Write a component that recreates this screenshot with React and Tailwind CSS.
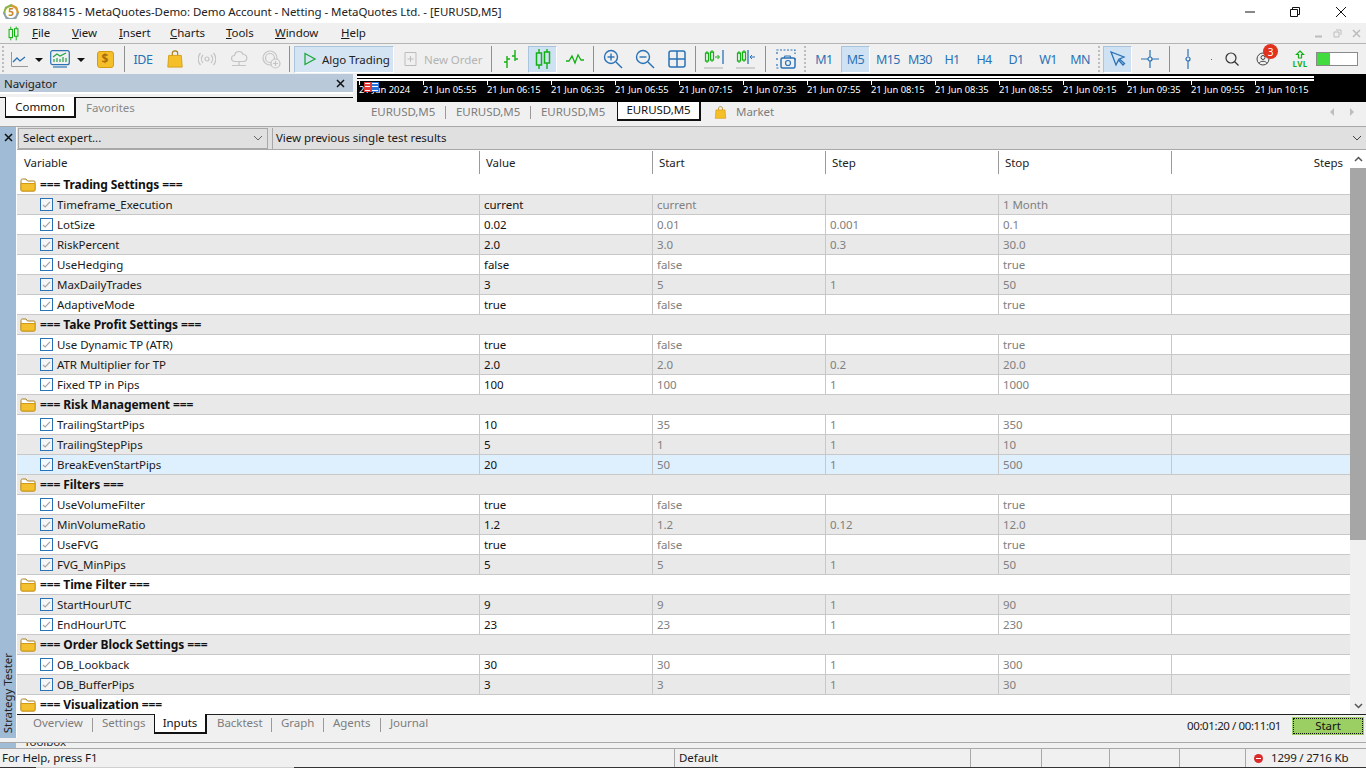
import React from "react";

const FONT = "font-['Noto_Sans',sans-serif]";

const rows = [
  { g: "=== Trading Settings ===" },
  { n: "Timeframe_Execution", v: "current", a: "current", s: "", e: "1 Month" },
  { n: "LotSize", v: "0.02", a: "0.01", s: "0.001", e: "0.1" },
  { n: "RiskPercent", v: "2.0", a: "3.0", s: "0.3", e: "30.0" },
  { n: "UseHedging", v: "false", a: "false", s: "", e: "true" },
  { n: "MaxDailyTrades", v: "3", a: "5", s: "1", e: "50" },
  { n: "AdaptiveMode", v: "true", a: "false", s: "", e: "true" },
  { g: "=== Take Profit Settings ===" },
  { n: "Use Dynamic TP (ATR)", v: "true", a: "false", s: "", e: "true" },
  { n: "ATR Multiplier for TP", v: "2.0", a: "2.0", s: "0.2", e: "20.0" },
  { n: "Fixed TP in Pips", v: "100", a: "100", s: "1", e: "1000" },
  { g: "=== Risk Management ===" },
  { n: "TrailingStartPips", v: "10", a: "35", s: "1", e: "350" },
  { n: "TrailingStepPips", v: "5", a: "1", s: "1", e: "10" },
  { n: "BreakEvenStartPips", v: "20", a: "50", s: "1", e: "500", hl: true },
  { g: "=== Filters ===" },
  { n: "UseVolumeFilter", v: "true", a: "false", s: "", e: "true" },
  { n: "MinVolumeRatio", v: "1.2", a: "1.2", s: "0.12", e: "12.0" },
  { n: "UseFVG", v: "true", a: "false", s: "", e: "true" },
  { n: "FVG_MinPips", v: "5", a: "5", s: "1", e: "50" },
  { g: "=== Time Filter ===" },
  { n: "StartHourUTC", v: "9", a: "9", s: "1", e: "90" },
  { n: "EndHourUTC", v: "23", a: "23", s: "1", e: "230" },
  { g: "=== Order Block Settings ===" },
  { n: "OB_Lookback", v: "30", a: "30", s: "1", e: "300" },
  { n: "OB_BufferPips", v: "3", a: "3", s: "1", e: "30" },
  { g: "=== Visualization ===" },
];

const times = ["05:55", "06:15", "06:35", "06:55", "07:15", "07:35", "07:55", "08:15", "08:35", "08:55", "09:15", "09:35", "09:55", "10:15"];

function Folder() {
  return (
    <svg width="16" height="14" viewBox="0 0 16 14" className="shrink-0">
      <path d="M1 12V2.5C1 1.7 1.5 1 2.3 1H6l1.5 2H14c.6 0 1 .4 1 1v8c0 .6-.4 1-1 1H2c-.6 0-1-.4-1-1Z" fill="#fff" stroke="#a8801c" />
      <path d="M1 5.5h14V12c0 .6-.4 1-1 1H2c-.6 0-1-.4-1-1Z" fill="#f5c02e" stroke="#d09a14" />
    </svg>
  );
}

function Check() {
  return (
    <div className="w-[13px] h-[13px] border border-[#2a72b5] flex items-center justify-center shrink-0 bg-white/60">
      <svg width="9" height="9" viewBox="0 0 9 9">
        <path d="M1 5l2.2 2L8 1.8" fill="none" stroke="#a6a6a6" strokeWidth="1.2" />
      </svg>
    </div>
  );
}

function Row({ row, i }) {
  const bg = row.hl ? "bg-[#deeffe]" : i % 2 === 0 ? "bg-white" : "bg-[#e9e9e9]";
  if (row.g) {
    return (
      <div className={`h-[20px] shrink-0 flex items-center pl-[3px] gap-[4px] border-b border-[#c8c8c8] ${bg}`}>
        <Folder />
        <span className="font-bold text-[12px] tracking-[-0.1px] text-[#111]">{row.g}</span>
      </div>
    );
  }
  const cell = "h-full flex items-center pl-[4px] border-r border-[#c8c8c8] text-[#808080]";
  return (
    <div className={`h-[20px] shrink-0 grid grid-cols-[463px_173px_173px_173px_173px_1fr] border-b border-[#c8c8c8] ${bg}`}>
      <div className="h-full flex items-center pl-[23px] gap-[4px] border-r border-[#c8c8c8] text-[#1a1a1a]">
        <Check />
        <span>{row.n}</span>
      </div>
      <div className={`${cell} !text-[#111]`}>{row.v}</div>
      <div className={cell}>{row.a}</div>
      <div className={cell}>{row.s}</div>
      <div className={cell}>{row.e}</div>
      <div />
    </div>
  );
}

function Tool({ children, active, w = "w-8" }) {
  if (active) {
    return (
      <div className="w-8 h-[27px] shrink-0 pl-px">
        <div className="w-[29px] h-[27px] flex items-center justify-center bg-[#cfe2f3] border border-[#a9c4dc] border-r-white border-b-white">
          {children}
        </div>
      </div>
    );
  }
  return <div className={`${w} h-[27px] flex items-center justify-center shrink-0`}>{children}</div>;
}

function Sep() {
  return (
    <div className="w-[5px] h-[26px] flex justify-center shrink-0">
      <div className="w-px h-full bg-[#8f8f8f]" />
    </div>
  );
}

function Grip() {
  return <div className="w-[6px] h-[26px] shrink-0 flex justify-center"><div className="h-full border-l-2 border-dotted border-[#bdbdbd]" /></div>;
}

function Tf({ label, active }) {
  return (
    <Tool active={active}>
      <span className="text-[12.5px] tracking-[-0.6px] mt-[2px] text-[#2a72b5]">{label}</span>
    </Tool>
  );
}

function Caret() {
  return <div className="w-0 h-0 border-x-[4px] border-x-transparent border-t-[4px] border-t-[#111] ml-[7px] mt-[2px]" />;
}

function Candles({ color = "#13b013", size = 22 }) {
  return (
    <svg width={size} height={size} viewBox="0 0 22 22">
      <path d="M7 1v4M7 17v4M15 1v3M15 15v6" stroke={color} strokeWidth="1.4" />
      <rect x="4.5" y="5" width="5" height="12" fill="none" stroke={color} strokeWidth="1.5" />
      <rect x="12.5" y="4" width="5" height="11" fill="none" stroke={color} strokeWidth="1.5" />
    </svg>
  );
}

function Bag({ size = 18 }) {
  return (
    <svg width={size} height={size} viewBox="0 0 18 20">
      <path d="M6 7V3.5C6 2 7.2 1 9 1s3 1 3 2.5V7" fill="none" stroke="#a87a10" strokeWidth="1.2" />
      <path d="M2 6h14l1 13H1Z" fill="#f5bf2a" stroke="#d59c12" />
    </svg>
  );
}

function ZoomGlass({ plus }) {
  return (
    <svg width="20" height="20" viewBox="0 0 20 20" fill="none" stroke="#2a72b5" strokeWidth="1.4">
      <circle cx="8" cy="8" r="6.5" />
      <path d="M13 13l6 6" />
      <path d="M4.5 8h7" />
      {plus && <path d="M8 4.5v7" />}
    </svg>
  );
}

function App() {
  return (
    <div className={`w-[1366px] h-[768px] overflow-hidden flex flex-col bg-[#f0f0f0] text-[11.5px] tracking-[-0.05px] leading-none text-[#1a1a1a] ${FONT}`}>
      {/* title bar */}
      <div className="h-[23px] bg-white flex items-center shrink-0 pl-[2px]">
        <svg width="18" height="18" viewBox="0 0 18 18" className="shrink-0">
          <path d="M9 1l6 3 2 6-3 6H4l-3-6 2-6Z" fill="#8fb04a" />
          <path d="M9 1l6 3 2 6H9Z" fill="#d99a2b" />
          <path d="M1 10l3 6h10l3-6Z" fill="#8ba3b0" />
          <circle cx="9" cy="9.5" r="5.5" fill="#fff" />
          <text x="9" y="13" textAnchor="middle" fontSize="10" fontWeight="700" fill="#c98a1c" fontFamily="Noto Sans">5</text>
        </svg>
        <span className="ml-[3px] text-[#222]">98188415 - MetaQuotes-Demo: Demo Account - Netting - MetaQuotes Ltd. - [EURUSD,M5]</span>
        <div className="ml-auto flex items-center">
          <svg width="12" height="12" viewBox="0 0 12 12" className="mr-[33px]"><path d="M1 6h10" stroke="#111" /></svg>
          <svg width="12" height="12" viewBox="0 0 12 12" className="mr-[34px]" fill="none" stroke="#111"><path d="M1.5 3.5h7v7h-7ZM3.5 3V1.5h7v7H9" /></svg>
          <svg width="12" height="12" viewBox="0 0 12 12" className="mr-[19px]" stroke="#111"><path d="M1 1l10 10M11 1L1 11" /></svg>
        </div>
      </div>

      {/* menu bar */}
      <div className="h-[20px] shrink-0 flex items-center relative">
        <div className="ml-[6px] w-[26px]"><Candles size={15} /></div>
        {[["F", "ile", "w-[40px]"], ["V", "iew", "w-[47px]"], ["I", "nsert", "w-[51px]"], ["C", "harts", "w-[56px]"], ["T", "ools", "w-[49px]"], ["W", "indow", "w-[66px]"], ["H", "elp", "w-[40px]"]].map(([u, rest, w]) => (
          <span key={u} className={w}><span className="underline">{u}</span>{rest}</span>
        ))}
        <div className="ml-auto flex items-center gap-[10px] pr-[5px]">
          <svg width="9" height="9" viewBox="0 0 9 9"><path d="M1 7.5h7" stroke="#bdbdbd" strokeWidth="2" /></svg>
          <svg width="9" height="9" viewBox="0 0 9 9" fill="none" stroke="#bdbdbd"><path d="M1 3h5v5H1ZM3 1h5v5" /></svg>
          <svg width="9" height="9" viewBox="0 0 9 9" stroke="#bdbdbd" strokeWidth="1.6"><path d="M1 1l7 7M8 1L1 8" /></svg>
        </div>
      </div>

      {/* toolbar */}
      <div className="h-[31px] shrink-0 flex items-center border-t border-[#b4b4b4]">
        <Grip />
        <div className="w-[2px]" />
        <Tool w="w-[38px]">
          <svg width="17" height="15" viewBox="0 0 17 15" fill="none" stroke="#2a72b5"><path d="M.5 0v14.5H17" stroke="#999" /><path d="M2 10l4-4 3 3 5-4" strokeWidth="1.3" /></svg>
          <Caret />
        </Tool>
        <Tool w="w-[42px]">
          <svg width="20" height="19" viewBox="0 0 20 19" fill="none" stroke="#2a72b5" strokeWidth="1.2"><rect x=".7" y=".7" width="18.6" height="14" rx="2" /><path d="M3 7l4-3 3 2 6-3" stroke="#27a34a" /><path d="M4 12V9M7 12V8M10 12V9M13 12V7M16 12V8" stroke="#27a34a" /><path d="M3 17h14" /></svg>
          <Caret />
        </Tool>
        <Tool w="w-[34px]">
          <div className="w-[17px] h-[17px] rounded-[3px] bg-[#f5bf2a] border border-[#d59c12] flex items-center justify-center text-[12px] font-bold text-[#a5700a]">$</div>
        </Tool>
        <Sep />
        <Tool><span className="text-[12.5px] tracking-[-0.4px] mt-[2px] text-[#2a72b5]">IDE</span></Tool>
        <Tool><Bag /></Tool>
        <Tool>
          <svg width="18" height="14" viewBox="0 0 18 14" fill="none" stroke="#c4c4c4" strokeWidth="1.2"><circle cx="9" cy="7" r="2" /><path d="M5 3a6 6 0 0 0 0 8M13 3a6 6 0 0 1 0 8M2.5 1a9 9 0 0 0 0 12M15.5 1a9 9 0 0 1 0 12" /></svg>
        </Tool>
        <Tool>
          <svg width="18" height="18" viewBox="0 0 18 18" fill="none" stroke="#c4c4c4" strokeWidth="1.2"><path d="M4.5 11.5a3 3 0 0 1 0-6 4.5 4.5 0 0 1 8.7-1 3.5 3.5 0 0 1 .3 7ZM9 11.5V15M2 15.5h14" /></svg>
        </Tool>
        <Tool>
          <svg width="19" height="19" viewBox="0 0 19 19" fill="none" stroke="#c4c4c4" strokeWidth="1.2"><circle cx="8" cy="8" r="7" /><circle cx="8" cy="8" r="4.5" /><circle cx="13.5" cy="13.5" r="4.5" fill="#f0f0f0" /><path d="M13.5 11v5M11 13.5h5" /></svg>
        </Tool>
        <Sep />
        <div className="ml-[2px] w-[100px] h-[27px] shrink-0 flex items-center bg-[#d5e4f2] border border-[#a9c4dc] border-r-white border-b-white pl-[8px]">
          <svg width="14" height="14" viewBox="0 0 14 14" fill="none" stroke="#1fa83a" strokeWidth="1.3" className="shrink-0"><path d="M2 1.5l10 5.5-10 5.5Z" /></svg>
          <span className="ml-[5px] mt-[2px] whitespace-nowrap text-[#222]">Algo Trading</span>
        </div>
        <div className="w-[95px] h-[27px] shrink-0 flex items-center pl-[10px]">
          <svg width="13" height="16" viewBox="0 0 13 16" fill="none" stroke="#bdbdbd" className="shrink-0"><path d="M1 1.5h11v13H1ZM6.5 5v6M3.5 8h6" /></svg>
          <span className="ml-[7px] mt-[2px] whitespace-nowrap text-[#b4b4b4]">New Order</span>
        </div>
        <Sep />
        <div className="w-px" />
        <Tool>
          <svg width="18" height="20" viewBox="0 0 18 20" stroke="#13b013" strokeWidth="1.4"><path d="M5 7v12M2 13h3M5 10h3M13 1v11M10 7h3M13 10h3" /></svg>
        </Tool>
        <Tool active><Candles /></Tool>
        <Tool>
          <svg width="18" height="12" viewBox="0 0 18 12" fill="none" stroke="#13b013" strokeWidth="1.3"><path d="M0 8h3l3-5 3 7 3-8 3 5h3" /></svg>
        </Tool>
        <Sep />
        <div className="w-px" />
        <Tool><ZoomGlass plus /></Tool>
        <Tool><ZoomGlass /></Tool>
        <Tool>
          <svg width="18" height="18" viewBox="0 0 18 18" fill="none" stroke="#2a72b5" strokeWidth="1.5"><rect x="1" y="1" width="16" height="16" rx="2" /><path d="M9 1v16M1 9h16" /></svg>
        </Tool>
        <Sep />
        <Tool>
          <svg width="20" height="22" viewBox="0 0 20 22" fill="none"><path d="M3 3v3M3 13v2M8 2v3M8 12v2" stroke="#13b013" /><rect x="1.5" y="5" width="3" height="8" stroke="#13b013" strokeWidth="1.2" /><rect x="6.5" y="4" width="3" height="8" stroke="#13b013" strokeWidth="1.2" /><path d="M11 9h4M13.5 7l2 2-2 2" stroke="#13b013" /><path d="M19 2v14" stroke="#2a72b5" strokeWidth="1.3" /><path d="M0 20h19" stroke="#b0b0b0" /></svg>
        </Tool>
        <Tool>
          <svg width="20" height="22" viewBox="0 0 20 22" fill="none"><path d="M3 3v3M3 13v2M8 2v3M8 12v2" stroke="#13b013" /><rect x="1.5" y="5" width="3" height="8" stroke="#13b013" strokeWidth="1.2" /><rect x="6.5" y="4" width="3" height="8" stroke="#13b013" strokeWidth="1.2" /><path d="M19 9h-5M16 7l-2 2 2 2" stroke="#2a72b5" /><path d="M12 2v14" stroke="#2a72b5" strokeWidth="1.3" /><path d="M0 20h19" stroke="#b0b0b0" /></svg>
        </Tool>
        <div className="w-px" />
        <Sep />
        <div className="w-[2px]" />
        <Tool>
          <svg width="20" height="20" viewBox="0 0 20 20" fill="none" stroke="#2a72b5" strokeWidth="1.2"><path d="M1 5V1h18v4M1 9v3M19 9v2M1 15v4h3" strokeDasharray="2 1.5" /><rect x="5" y="9" width="14" height="10" rx="1.5" strokeWidth="1.5" /><circle cx="12" cy="14" r="2.5" /><path d="M8 9l1-2h5l1 2" /></svg>
        </Tool>
        <Grip />
        {["M1", "M5", "M15", "M30", "H1", "H4", "D1", "W1", "MN"].map((t) => <Tf key={t} label={t} active={t === "M5"} />)}
        <Grip />
        <Tool active>
          <svg width="16" height="16" viewBox="0 0 16 16" fill="none" stroke="#2a72b5" strokeWidth="1.3"><path d="M1 1l5 13 2.5-5L13 14l1.5-1.5L9.5 8 14 6Z" /></svg>
        </Tool>
        <Tool>
          <svg width="18" height="18" viewBox="0 0 18 18" fill="none" stroke="#2a72b5" strokeWidth="1.2"><path d="M9 0v7M9 11v7M0 9h7M11 9h7" /><circle cx="9" cy="9" r="2" /></svg>
        </Tool>
        <div className="w-px" />
        <Sep />
        <Tool>
          <svg width="6" height="20" viewBox="0 0 6 20" fill="none" stroke="#2a72b5" strokeWidth="1.2"><path d="M3 0v7.5M3 12v8" /><circle cx="3" cy="10" r="2" /></svg>
        </Tool>
        <Tool w="w-[14px]"><div className="w-px h-px bg-[#2a72b5]" /></Tool>
        <Tool w="w-[28px]">
          <svg width="14" height="14" viewBox="0 0 14 14" fill="none" stroke="#333" strokeWidth="1.2"><circle cx="6" cy="6" r="5" /><path d="M9.5 9.5L13.5 13.5" /></svg>
        </Tool>
        <div className="w-px" />
        <Tool>
          <div className="relative">
            <svg width="14" height="14" viewBox="0 0 14 14" fill="none" stroke="#444"><circle cx="7" cy="7" r="6" /><circle cx="7" cy="5.5" r="2" /><path d="M3 11.5c1-3 7-3 8 0" /></svg>
            <div className="absolute -top-[8px] left-[7px] w-[15px] h-[15px] rounded-full bg-[#e2311d] flex items-center justify-center text-[10px] text-white">3</div>
          </div>
        </Tool>
        <div className="w-[5px]" />
        <Tool>
          <div className="flex flex-col items-center text-[#13b013]">
            <svg width="10" height="9" viewBox="0 0 10 9" fill="none" stroke="#13b013" strokeWidth="1.2"><path d="M5 1l3.5 3.5H6.5V8h-3V4.5H1.5Z" /></svg>
            <span className="text-[8px] font-bold tracking-[.3px] mt-px">LVL</span>
          </div>
        </Tool>
        <div className="w-[42px] h-[14px] shrink-0 border border-[#8a8a8a] bg-white">
          <div className="w-[13px] h-full bg-[#3fdb3f]" />
        </div>
      </div>

      {/* navigator + charts */}
      <div className="h-[52px] shrink-0 flex">
        <div className="w-[357px] shrink-0 flex flex-col">
          <div className="h-[18px] shrink-0 bg-[#b9c9d9] mr-[4px] flex items-center pl-[4px] pt-px text-[#222] justify-between pr-[8px]">
            <span>Navigator</span>
            <svg width="9" height="9" viewBox="0 0 9 9" stroke="#111" strokeWidth="1.5"><path d="M1 1l7 7M8 1L1 8" /></svg>
          </div>
          <div className="h-[2px] bg-white mr-[4px]" />
          <div className="h-[3px] mr-[4px]" />
          <div className="flex mr-[4px] h-[22px]">
            <div className="w-[5px] border-t border-[#111]" />
            <div className="w-[71px] h-[21px] bg-white border-x border-b border-[#111] border-r-2 border-b-2 flex items-center justify-center text-[#111]">Common</div>
            <div className="flex-1 border-t border-[#111] flex items-center pl-[10px] pb-[2px] text-[#8a8a8a]">Favorites</div>
          </div>
        </div>
        <div className="flex-1 flex flex-col min-w-0">
          <div className="h-[28px] shrink-0 bg-black relative overflow-hidden">
            <div className="h-[2px] mt-[2px] w-[957px] bg-white" />
            <div className="h-[2px] mt-px w-[957px] bg-white" />
            <div className="flex pl-[2px] text-[9.4px] tracking-normal text-white">
              <div className="w-[64px] shrink-0 relative">
                <div className="w-px h-[4px] bg-white" />
                <span className="block whitespace-nowrap">21 Jun 2024</span>
                <div className="absolute left-[5px] top-px flex">
                  <div className="w-[7px] h-[10px] bg-[#e23b3b] flex flex-col justify-around px-px"><div className="h-px bg-white" /><div className="h-px bg-white" /><div className="h-px bg-white" /></div>
                  <div className="w-[8px] h-[10px] bg-[#2a72d5] flex flex-col justify-around px-px"><div className="h-px bg-white" /><div className="h-px bg-white" /><div className="h-px bg-white" /></div>
                </div>
              </div>
              {times.map((t) => (
                <div key={t} className="w-[64px] shrink-0">
                  <div className="w-px h-[4px] bg-white" />
                  <span className="block whitespace-nowrap">21 Jun {t}</span>
                </div>
              ))}
            </div>
          </div>
          <div className="h-[20px] shrink-0 flex items-center text-[#7d7d7d] pl-[14px]">
            <span className="w-[74px]">EURUSD,M5</span>
            <div className="w-px h-[13px] bg-[#9a9a9a] mr-[10px]" />
            <span className="w-[74px]">EURUSD,M5</span>
            <div className="w-px h-[13px] bg-[#9a9a9a] mr-[10px]" />
            <span className="w-[76px]">EURUSD,M5</span>
            <div className="w-[84px] h-[20px] -mt-[2px] bg-white border-x border-b border-[#111] border-r-2 border-b-2 flex items-center justify-center text-[#111]">EURUSD,M5</div>
            <div className="ml-[13px]"><Bag size={13} /></div>
            <span className="ml-[9px]">Market</span>
            <div className="ml-auto flex items-center gap-[16px] pr-[12px]">
              <div className="w-0 h-0 border-y-[4px] border-y-transparent border-r-[4px] border-r-[#bdbdbd]" />
              <div className="w-0 h-0 border-y-[4px] border-y-transparent border-l-[4px] border-l-[#bdbdbd]" />
            </div>
          </div>
          <div className="flex-1" />
        </div>
      </div>

      {/* strategy tester */}
      <div className="flex-1 min-h-0 flex border-t border-[#a8a8a8]">
        <div className="w-[17px] shrink-0 flex flex-col">
          <div className="h-[611px] bg-[#9fbbd6] flex flex-col items-center justify-between pb-[5px] border-r border-white">
            <svg width="9" height="9" viewBox="0 0 9 9" stroke="#111" strokeWidth="1.5" className="mt-[6px]"><path d="M1 1l7 7M8 1L1 8" /></svg>
            <span className="[writing-mode:vertical-rl] rotate-180 text-[#222] whitespace-nowrap">Strategy Tester</span>
          </div>
        </div>
        <div className="flex-1 min-w-0 flex flex-col">
          <div className="h-[23px] shrink-0 flex items-center gap-[4px] bg-[#e0e0e0] border-b border-[#a8a8a8] pl-px">
            <div className="w-[250px] h-[21px] border border-[#a8a8a8] flex items-center justify-between px-[4px]">
              <span>Select expert...</span>
              <svg width="10" height="6" viewBox="0 0 10 6" fill="none" stroke="#666"><path d="M1 1l4 4 4-4" /></svg>
            </div>
            <div className="flex-1 h-[21px] border-l border-[#a8a8a8] flex items-center justify-between px-[3px]">
              <span>View previous single test results</span>
              <svg width="10" height="6" viewBox="0 0 10 6" fill="none" stroke="#444" className="mr-[1px]"><path d="M1 1l4 4 4-4" /></svg>
            </div>
          </div>
          <div className="flex-1 min-h-0 flex bg-white">
            <div className="flex-1 min-w-0 flex flex-col">
              <div className="h-[25px] shrink-0 grid grid-cols-[463px_173px_173px_173px_173px_1fr] items-center bg-white text-[#222]">
                {["Variable", "Value", "Start", "Step", "Stop"].map((h, i) => (
                  <div key={h} className={`h-[23px] flex items-center border-r border-[#9a9a9a] ${i === 0 ? "pl-[7px]" : "pl-[6px]"}`}>{h}</div>
                ))}
                <div className="text-right pr-[7px]">Steps</div>
              </div>
              <div className="flex-1 min-h-0 overflow-hidden flex flex-col">
                {rows.map((r, i) => <Row key={i} row={r} i={i} />)}
              </div>
            </div>
            <div className="w-[16px] shrink-0 bg-[#f0f0f0] flex flex-col">
              <div className="h-[18px] flex items-center justify-center bg-white">
                <svg width="9" height="6" viewBox="0 0 9 6" fill="none" stroke="#555" strokeWidth="1.5"><path d="M1 5l3.5-3.5L8 5" /></svg>
              </div>
              <div className="h-[372px] bg-[#a6a6a6]" />
              <div className="flex-1" />
              <div className="h-[17px] flex items-center justify-center">
                <svg width="9" height="6" viewBox="0 0 9 6" fill="none" stroke="#555" strokeWidth="1.5"><path d="M1 1l3.5 3.5L8 1" /></svg>
              </div>
            </div>
          </div>
          <div className="h-[28px] shrink-0 flex items-start border-t border-[#222] text-[#7d7d7d]">
            <span className="ml-[16px] mt-[2px] w-[59px]">Overview</span>
            <div className="w-px h-[14px] bg-[#9a9a9a] mt-[3px]" />
            <span className="mt-[2px] w-[61px] pl-[9px]">Settings</span>
            <div className="w-[53px] h-[20px] -mt-px pb-px bg-white border-x border-b border-[#111] border-r-2 border-b-2 flex items-center justify-center text-[#111]">Inputs</div>
            <span className="mt-[2px] w-[64px] pl-[10px]">Backtest</span>
            <div className="w-px h-[14px] bg-[#9a9a9a] mt-[3px]" />
            <span className="mt-[2px] w-[51px] pl-[9px]">Graph</span>
            <div className="w-px h-[14px] bg-[#9a9a9a] mt-[3px]" />
            <span className="mt-[2px] w-[56px] pl-[9px]">Agents</span>
            <div className="w-px h-[14px] bg-[#9a9a9a] mt-[3px]" />
            <span className="mt-[2px] pl-[9px]">Journal</span>
            <div className="ml-auto flex items-center mt-[2px] h-[18px]">
              <span className="text-[#222] tracking-[-0.4px] mr-[11px]">00:01:20 / 00:11:01</span>
              <div className="w-[72px] h-[18px] bg-[#9bcf63] flex items-center justify-center p-px mr-[2px]">
                <div className="w-full h-full border border-dotted border-[#111] flex items-center justify-center text-[#111]">Start</div>
              </div>
            </div>
          </div>
        </div>
      </div>

      {/* toolbox sliver */}
      <div className="h-[6px] shrink-0 border-t border-[#a8a8a8] flex overflow-hidden">
        <div className="w-[16px] bg-[#9fbbd6]" />
        <span className="ml-[8px] -mt-[7px] text-[#222]">Toolbox</span>
      </div>

      {/* status bar */}
      <div className="h-[19px] shrink-0 border-t border-[#a8a8a8] flex items-center">
        <div className="w-[674px] pl-[2px]">For Help, press F1</div>
        <div className="w-[296px] h-full border-l border-[#a8a8a8] pl-[4px] flex items-center">Default</div>
        <div className="w-[71px] h-full border-l border-[#a8a8a8]" />
        <div className="w-[68px] h-full border-l border-[#a8a8a8]" />
        <div className="w-[70px] h-full border-l border-[#a8a8a8]" />
        <div className="w-[66px] h-full border-l border-[#a8a8a8]" />
        <div className="flex-1 h-full border-l border-[#a8a8a8] flex items-center pl-[8px]">
          <div className="w-[9px] h-[9px] rounded-full bg-[#d92b2b] flex items-center justify-center"><div className="w-[5px] h-px bg-white" /></div>
          <span className="ml-[8px] tracking-[-0.2px]">1299 / 2716 Kb</span>
        </div>
      </div>
      <div className="h-px shrink-0 flex bg-[#333]">
        <div className="ml-[36px] w-[258px] bg-[#d0d0d0]" />
      </div>
    </div>
  );
}

export default App;
